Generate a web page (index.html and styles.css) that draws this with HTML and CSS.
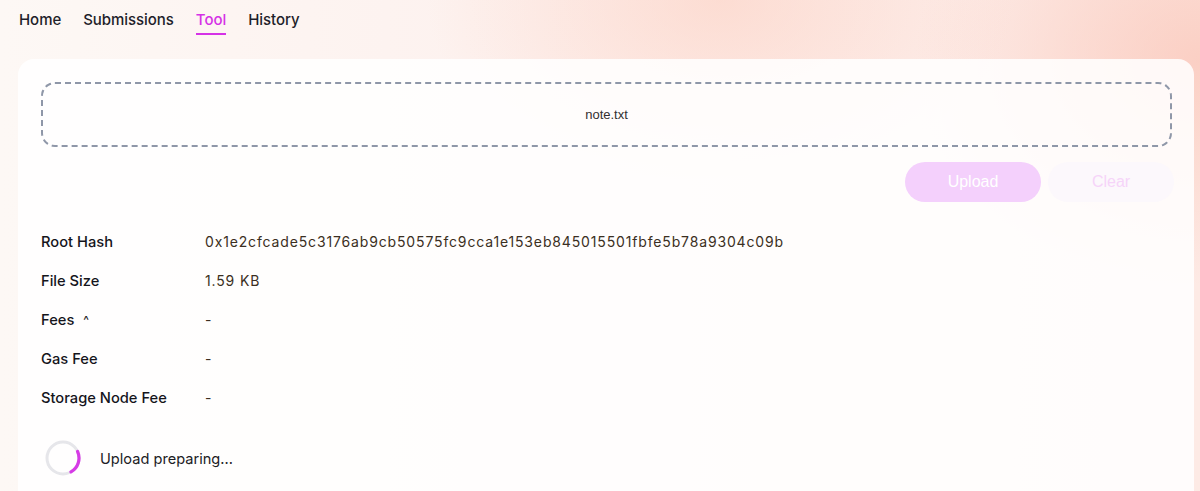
FILE: index.html
```html
<!DOCTYPE html>
<html lang="en">
<head>
<meta charset="utf-8">
<title>Tool</title>
<link rel="stylesheet" href="styles.css">
</head>
<body>
<nav class="nav">
  <a class="nav-item">Home</a>
  <a class="nav-item">Submissions</a>
  <a class="nav-item active">Tool</a>
  <a class="nav-item">History</a>
</nav>
<main class="card">
  <div class="dropzone">note.txt</div>
  <div class="actions">
    <button class="btn btn-upload">Upload</button>
    <button class="btn btn-clear">Clear</button>
  </div>
  <div class="info">
    <div class="row"><div class="label">Root Hash</div><div class="value">0x1e2cfcade5c3176ab9cb50575fc9cca1e153eb845015501fbfe5b78a9304c09b</div></div>
    <div class="row"><div class="label">File Size</div><div class="value">1.59 KB</div></div>
    <div class="row"><div class="label">Fees <span class="caret">^</span></div><div class="value">-</div></div>
    <div class="row"><div class="label">Gas Fee</div><div class="value">-</div></div>
    <div class="row"><div class="label">Storage Node Fee</div><div class="value">-</div></div>
  </div>
  <div class="status">
    <svg class="spinner" width="36" height="36" viewBox="0 0 36 36">
      <circle cx="18" cy="18" r="16" fill="none" stroke="#e6e6ea" stroke-width="3"/>
      <path d="M32.6 11.5 A16 16 0 0 1 26 31.9" fill="none" stroke="#d63be6" stroke-width="3.2" stroke-linecap="round"/>
    </svg>
    <span class="status-text">Upload preparing...</span>
  </div>
</main>
</body>
</html>
```
FILE: styles.css
```css
html, body {
  margin: 0;
  padding: 0;
}
body {
  width: 1200px;
  height: 491px;
  overflow: hidden;
  font-family: Inter, "Noto Sans", sans-serif;
  color: #1c1c24;
  background:
    radial-gradient(ellipse 420px 260px at 720px 0px, rgba(252, 205, 190, 0.55), rgba(252, 205, 190, 0) 70%),
    radial-gradient(ellipse 380px 300px at 1200px 60px, rgba(250, 196, 182, 0.7), rgba(250, 196, 182, 0) 75%),
    linear-gradient(90deg, #fdf8f5 0%, #fdf1ee 45%, #fdeae5 100%);
}
.nav {
  display: flex;
  gap: 22px;
  padding: 11px 0 0 19px;
  height: 49px;
  box-sizing: border-box;
}
.nav-item {
  font-size: 15px;
  font-weight: 500;
  color: #1e1e2a;
  line-height: 18px;
  height: 24px;
  box-sizing: border-box;
  letter-spacing: -0.05px;
}
.nav-item.active {
  color: #d532e6;
  border-bottom: 2px solid #d532e6;
}
.card {
  margin: 10px 6px 0 18px;
  background: rgba(255, 255, 255, 0.86);
  border-radius: 16px 16px 0 0;
  padding: 23px 22px 0 23px;
  height: 432px;
  box-sizing: border-box;
}
.dropzone {
  height: 65px;
  box-sizing: border-box;
  border: 2px dashed #8f97a8;
  border-radius: 14px;
  display: flex;
  align-items: center;
  justify-content: center;
  font-family: "Liberation Sans", Arial, sans-serif;
  font-size: 13px;
  color: #333030;
}
.actions {
  display: flex;
  justify-content: flex-end;
  gap: 7px;
  margin-top: 15px;
}
.btn {
  height: 40px;
  border: none;
  border-radius: 20px;
  font-family: "Liberation Sans", Arial, sans-serif;
  font-size: 16px;
  padding: 0;
}
.btn-upload {
  width: 136px;
  background: #f4d0fc;
  color: #ffffff;
}
.btn-clear {
  width: 126px;
  background: #fcf8fc;
  color: #f6d4f9;
  margin-right: -2px;
}
.info {
  margin-top: 20px;
}
.row {
  display: flex;
  align-items: center;
  height: 39px;
}
.label {
  width: 164px;
  font-size: 14.7px;
  font-weight: 500;
  color: #15151c;
}
.caret {
  font-size: 12px;
  margin-left: 5px;
  vertical-align: 1px;
}
.value {
  font-size: 14px;
  color: #3b2f22;
  letter-spacing: 0.85px;
}
.status {
  display: flex;
  align-items: center;
  gap: 19px;
  margin-top: 23px;
  padding-left: 4px;
}
.spinner {
  display: block;
}
.status-text {
  font-size: 14.6px;
  color: #202024;
  padding-top: 2px;
}
```
